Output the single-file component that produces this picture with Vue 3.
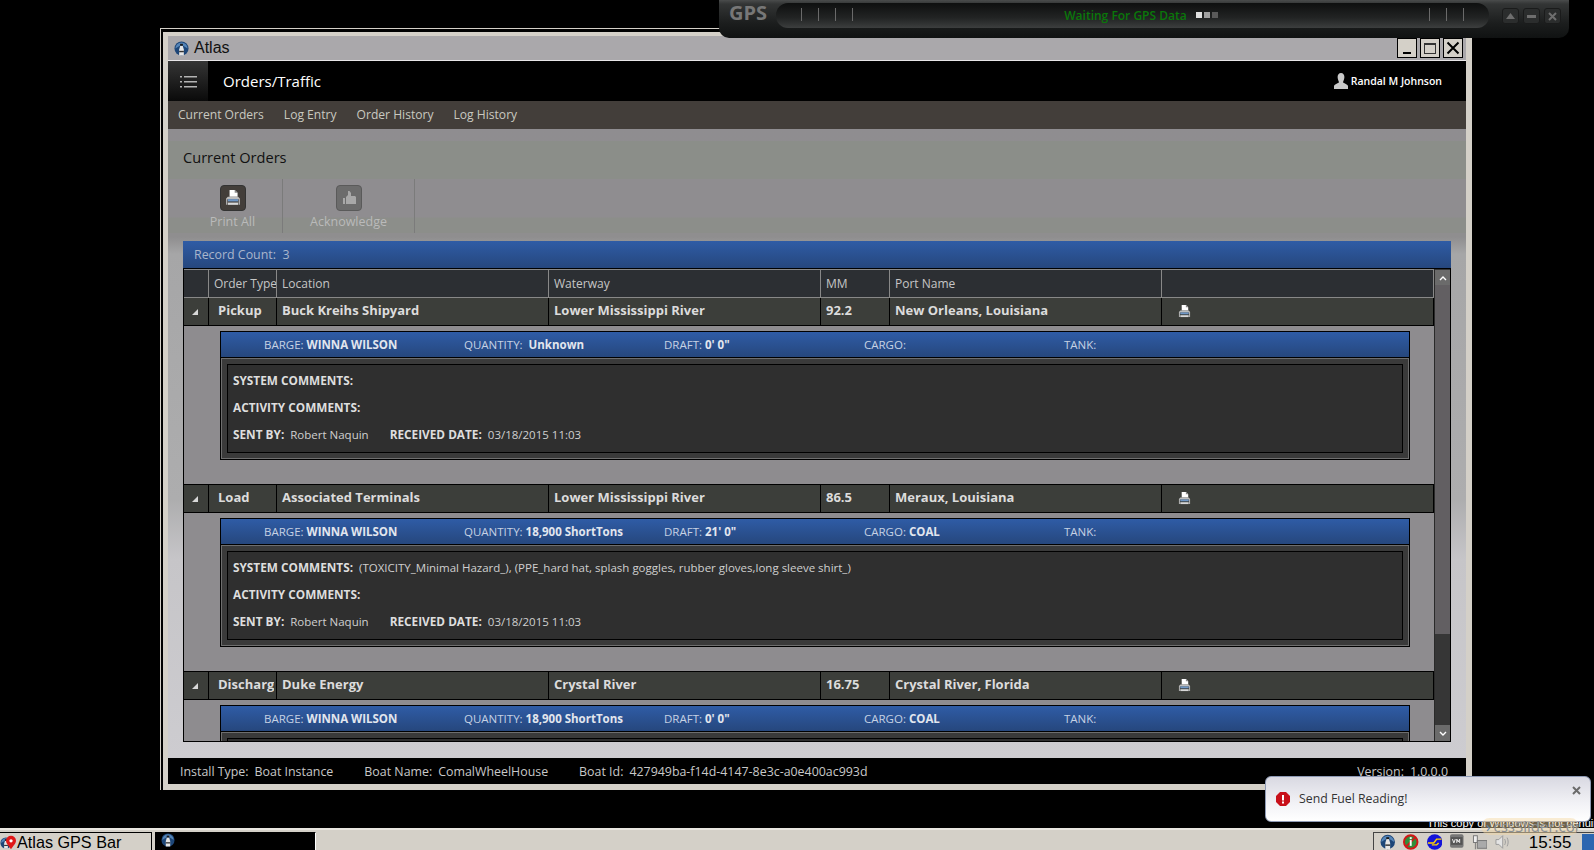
<template>
  <div class="desktop">
    <!-- shared icons -->
    <svg class="sprite" width="0" height="0">
      <symbol id="logo" viewBox="0 0 16 16">
        <circle cx="8" cy="8" r="7.500" fill="#1d4678" />
        <path d="M1.500 8a6.500 6.500 0 0 1 13 0l-3-2-3.500-2-3.500 2z" fill="#5585b8" />
        <path d="M5.500 15.500V9l1.200-4h2.600l1.200 4v6.500z" fill="#e6e6e6" />
        <rect x="6.500" y="3" width="3" height="2" fill="#1a1a1a" />
        <rect x="5.500" y="10.500" width="5" height="1.500" fill="#333" />
      </symbol>
      <symbol id="printer" viewBox="0 0 14 14">
        <path d="M4 0h4.500L11 2.500V6H4z" fill="#fff" />
        <path d="M8.500 0v2.500H11z" fill="#8a8a8a" />
        <path d="M1 13V7.500L2.500 6h9L13 7.500V13h-1V8H2v5z" fill="#bdbdbd" />
        <rect x="2.500" y="8" width="9" height="2" fill="#6f97c6" />
        <rect x="2.500" y="11" width="9" height="2" fill="#d8d8d8" />
      </symbol>
    </svg>

    <!-- Atlas window -->
    <div class="window">
      <div class="window-frame">
        <div class="titlebar">
          <svg class="title-logo" width="15" height="15"><use href="#logo" /></svg>
          <span class="title-text">Atlas</span>
          <div class="win-buttons">
            <button class="win-btn"><span class="min-mark"></span></button>
            <button class="win-btn"><span class="max-mark"></span></button>
            <button class="win-btn close">
              <svg width="14" height="14" viewBox="0 0 14 14"><path d="M1.500 1.500l11 11M12.500 1.500l-11 11" stroke="#000" stroke-width="2" /></svg>
            </button>
          </div>
        </div>

        <header class="app-header">
          <div class="menu-btn">
            <svg width="17" height="13" viewBox="0 0 17 13" fill="#b4b4b4">
              <rect x="0" y="1" width="2" height="1.500" />
              <rect x="4" y="1" width="13" height="1.500" />
              <rect x="0" y="6" width="2" height="1.500" />
              <rect x="4" y="6" width="13" height="1.500" />
              <rect x="0" y="11" width="2" height="1.500" />
              <rect x="4" y="11" width="13" height="1.500" />
            </svg>
          </div>
          <div class="app-title">Orders/Traffic</div>
          <div class="user">
            <svg width="14" height="16" viewBox="0 0 14 16" fill="#c9c9c9">
              <path d="M7 0c2.200 0 3.400 1.700 3.400 4S9.300 8 9 9.200c.3 1 4.500 1.600 5 3.800v3H0v-3c.5-2.200 4.700-2.800 5-3.800C4.700 8 3.600 6.300 3.600 4S4.800 0 7 0z" />
            </svg>
            <span>Randal M Johnson</span>
          </div>
        </header>

        <nav class="subnav">
          <a v-for="item in navItems" :key="item">{{ item }}</a>
        </nav>

        <main class="content">
          <div class="page-title">Current Orders</div>

          <div class="toolbar">
            <div class="tool print-all">
              <div class="tool-icon">
                <svg width="16" height="16"><use href="#printer" /></svg>
              </div>
              <span>Print All</span>
            </div>
            <div class="tool ack">
              <div class="tool-icon disabled">
                <svg width="14" height="14" viewBox="0 0 14 14" fill="#a8a8a8">
                  <path d="M4 6l2-2V0h1.500L9 2v3h4l1 1v7H4zM1 7h2v6H1z" />
                </svg>
              </div>
              <span>Acknowledge</span>
            </div>
          </div>

          <div class="record-bar">Record Count:&nbsp; 3</div>

          <div class="grid">
            <div class="grid-main">
              <div class="grid-head cols">
                <div></div>
                <div>Order Type</div>
                <div>Location</div>
                <div>Waterway</div>
                <div>MM</div>
                <div>Port Name</div>
                <div></div>
              </div>

              <div class="grid-body">
                <section v-for="order in orders" :key="order.location" class="order">
                  <div class="order-row cols">
                    <div class="expander">
                      <svg width="6" height="6" viewBox="0 0 6 6"><path d="M6 0v6H0z" fill="#d8d8d8" /></svg>
                    </div>
                    <div class="type">{{ order.type }}</div>
                    <div>{{ order.location }}</div>
                    <div>{{ order.waterway }}</div>
                    <div>{{ order.mm }}</div>
                    <div>{{ order.port }}</div>
                    <div class="print-cell">
                      <svg width="13" height="13"><use href="#printer" /></svg>
                    </div>
                  </div>

                  <div class="card">
                    <div class="card-head">
                      <div>BARGE: <b>WINNA WILSON</b></div>
                      <div>QUANTITY:{{ order.quantity === 'Unknown' ? '\u00a0 ' : ' ' }}<b>{{ order.quantity }}</b></div>
                      <div>DRAFT: <b>{{ order.draft }}</b></div>
                      <div>CARGO: <b>{{ order.cargo }}</b></div>
                      <div>TANK:</div>
                    </div>
                    <div class="card-panel">
                      <div class="card-inner">
                        <div class="line"><b>SYSTEM COMMENTS:</b><span>{{ order.comments }}</span></div>
                        <div class="line"><b>ACTIVITY COMMENTS:</b></div>
                        <div class="line">
                          <b>SENT BY:</b><span>Robert Naquin</span>
                          <b class="received">RECEIVED DATE:</b><span>03/18/2015 11:03</span>
                        </div>
                      </div>
                    </div>
                  </div>
                </section>
              </div>
            </div>

            <div class="scrollbar">
              <div class="scroll-btn">
                <svg width="8" height="5" viewBox="0 0 8 5"><path d="M1 4l3-3 3 3" fill="none" stroke="#fff" stroke-width="1.400" /></svg>
              </div>
              <div class="scroll-thumb"></div>
              <div class="scroll-track"></div>
              <div class="scroll-btn">
                <svg width="8" height="5" viewBox="0 0 8 5"><path d="M1 1l3 3 3-3" fill="none" stroke="#fff" stroke-width="1.400" /></svg>
              </div>
            </div>
          </div>
        </main>

        <footer class="statusbar">
          <span class="st-label">Install Type:</span><span class="st-value">Boat Instance</span>
          <span class="st-label gap">Boat Name:</span><span class="st-value">ComalWheelHouse</span>
          <span class="st-label gap">Boat Id:</span><span class="st-value">427949ba-f14d-4147-8e3c-a0e400ac993d</span>
          <span class="st-label version">Version:</span><span class="st-value">1.0.0.0</span>
        </footer>
      </div>
    </div>

    <!-- GPS bar docked at the top of the screen -->
    <div class="gps">
      <div class="gps-label">GPS</div>
      <div class="gps-track">
        <div class="ticks">
          <i v-for="n in 4" :key="n"></i>
        </div>
        <div class="gps-status">
          <span>Waiting For GPS Data</span>
          <div class="dots">
            <i class="d1"></i><i class="d2"></i><i class="d3"></i>
          </div>
        </div>
        <div class="ticks">
          <i v-for="n in 3" :key="n"></i>
        </div>
      </div>
      <div class="gps-btns">
        <button><svg width="9" height="6" viewBox="0 0 9 6"><path d="M4.500 0L9 6H0z" fill="#6e6e6e" /></svg></button>
        <button><svg width="9" height="3" viewBox="0 0 9 3"><rect width="9" height="3" fill="#6e6e6e" /></svg></button>
        <button><svg width="9" height="9" viewBox="0 0 9 9"><path d="M1 1l7 7M8 1L1 8" stroke="#6e6e6e" stroke-width="2" /></svg></button>
      </div>
    </div>

    <div class="genuine">This copy of Windows is not genuine</div>

    <!-- notification -->
    <div class="toast">
      <svg width="14" height="14" viewBox="0 0 14 14">
        <path d="M4 0h6l4 4v6l-4 4H4l-4-4V4z" fill="#c8101a" />
        <rect x="6" y="3" width="2" height="5.500" fill="#fff" />
        <rect x="6" y="9.500" width="2" height="2" fill="#fff" />
      </svg>
      <span>Send Fuel Reading!</span>
      <svg class="toast-close" width="9" height="9" viewBox="0 0 9 9"><path d="M1 1l7 7M8 1L1 8" stroke="#6b6b6b" stroke-width="2" /></svg>
    </div>

    <div class="watermark"><i>&#8250;</i>cssSlider.com</div>

    <!-- windows taskbar -->
    <div class="taskbar">
      <div class="task-btn gps-task">
        <svg class="task-logo" width="12" height="14"><use href="#logo" /></svg>
        <svg class="pin" width="10" height="15" viewBox="0 0 12 16">
          <path d="M6 0a6 6 0 0 1 6 6c0 3.500-4 7-6 10C4 13 0 9.500 0 6a6 6 0 0 1 6-6z" fill="#e01818" />
          <circle cx="6" cy="6" r="2" fill="#fff" />
        </svg>
        <span>Atlas GPS Bar</span>
      </div>
      <div class="task-btn atlas-task">
        <svg width="14" height="14"><use href="#logo" /></svg>
      </div>
      <div class="tray">
        <svg width="16" height="16"><use href="#logo" /></svg>
        <svg width="16" height="16" viewBox="0 0 16 16">
          <circle cx="8" cy="8" r="7" fill="#2f8f3a" stroke="#d01818" stroke-width="2" />
          <path d="M3 13L13 3" stroke="#d01818" stroke-width="2" />
          <rect x="7" y="3" width="2" height="2" fill="#fff" /><rect x="7" y="6" width="2" height="6" fill="#fff" />
        </svg>
        <svg width="16" height="16" viewBox="0 0 16 16">
          <circle cx="8" cy="8" r="8" fill="#1414d8" />
          <path d="M1 9h6l3-4h5M5 11h5l2-2" stroke="#ffd400" stroke-width="1.500" fill="none" />
        </svg>
        <svg width="14" height="14" viewBox="0 0 14 14">
          <rect width="14" height="14" rx="2" fill="#777" />
          <rect x="1" y="3" width="12" height="8" fill="#555" />
          <path d="M2.500 5l1.500 4 1.500-4M7 9V5l1.500 3L10 5v4" stroke="#eee" stroke-width="1" fill="none" />
        </svg>
        <svg width="16" height="16" viewBox="0 0 16 16" fill="none" stroke="#777">
          <rect x="1.500" y="1.500" width="4" height="7" fill="#eee" />
          <rect x="5.500" y="6.500" width="10" height="8" fill="#aaa" />
          <path d="M3.500 8.500v7" />
        </svg>
        <svg width="15" height="16" viewBox="0 0 15 16" fill="none" stroke="#9a9a9a">
          <path d="M1 5.500h3l4-4v13l-4-4H1z" fill="#e4e4e4" />
          <path d="M10 5c1 2 1 4 0 6M12.500 3.500c1.500 3 1.500 6 0 9" />
        </svg>
        <span class="clock">15:55</span>
        <div class="show-desktop"></div>
      </div>
    </div>
  </div>
</template>

<script setup>
const navItems = ['Current Orders', 'Log Entry', 'Order History', 'Log History']

const orders = [
  {
    type: 'Pickup',
    location: 'Buck Kreihs Shipyard',
    waterway: 'Lower Mississippi River',
    mm: '92.2',
    port: 'New Orleans, Louisiana',
    quantity: 'Unknown',
    draft: `0' 0"`,
    cargo: '',
    comments: ''
  },
  {
    type: 'Load',
    location: 'Associated Terminals',
    waterway: 'Lower Mississippi River',
    mm: '86.5',
    port: 'Meraux, Louisiana',
    quantity: '18,900 ShortTons',
    draft: `21' 0"`,
    cargo: 'COAL',
    comments: '(TOXICITY_Minimal Hazard_), (PPE_hard hat, splash goggles, rubber gloves,long sleeve shirt_)'
  },
  {
    type: 'Discharge',
    location: 'Duke Energy',
    waterway: 'Crystal River',
    mm: '16.75',
    port: 'Crystal River, Florida',
    quantity: '18,900 ShortTons',
    draft: `0' 0"`,
    cargo: 'COAL',
    comments: ''
  }
]
</script>

<style>
body {
  margin: 0;
  background: #000;
}
</style>

<style scoped>
.desktop {
  position: relative;
  width: 1594px;
  height: 850px;
  overflow: hidden;
  background: #000;
  display: flex;
  flex-direction: column;
  justify-content: flex-end;
  font-family: "Open Sans", "Noto Sans", sans-serif;
}

.sprite {
  position: absolute;
}

/* window */
.window {
  position: absolute;
  left: 160px;
  top: 28px;
  width: 1312px;
  height: 762px;
  box-sizing: border-box;
  border-left: 1px solid #d4d0c8;
  border-top: 1px solid #d4d0c8;
  padding: 3px 0 0 2px;
  background: #000;
}

.window-frame {
  height: 100%;
  box-sizing: border-box;
  border: solid #d4d0c8;
  border-width: 4px 6px 6px 5px;
  display: flex;
  flex-direction: column;
}

.titlebar {
  height: 25px;
  box-sizing: border-box;
  flex: none;
  background: #aaa8ab;
  border-bottom: 1px solid #e8e6e8;
  display: flex;
  align-items: center;
  padding-left: 6px;
}

.title-text {
  margin-left: 5px;
  font: 16px "Liberation Sans", sans-serif;
  color: #111;
}

.win-buttons {
  margin-left: auto;
  margin-right: 3px;
  display: flex;
  gap: 3px;
  height: 20px;
  margin-top: 2px;
  align-self: flex-start;
}

.win-btn {
  width: 20px;
  height: 20px;
  padding: 0;
  border: 1px solid #000;
  background: #d4d0c8;
  position: relative;
  display: flex;
  align-items: center;
  justify-content: center;
}

.min-mark {
  position: absolute;
  left: 5px;
  bottom: 3px;
  width: 8px;
  height: 2px;
  background: #000;
}

.max-mark {
  width: 12px;
  height: 11px;
  border: 1px solid #333;
  border-top-width: 2px;
  box-sizing: border-box;
}

.app-header {
  height: 40px;
  flex: none;
  background: #000;
  display: flex;
  align-items: center;
}

.menu-btn {
  width: 40px;
  height: 100%;
  background: linear-gradient(#353535, #0a0a0a);
  display: flex;
  align-items: center;
  justify-content: center;
}

.app-title {
  margin-left: 15px;
  font-size: 15px;
  color: #fff;
}

.user {
  margin-left: auto;
  margin-right: 24px;
  display: flex;
  align-items: center;
  gap: 3px;
  font-size: 10.500px;
  font-weight: 600;
  color: #fff;
}

.subnav {
  height: 28px;
  flex: none;
  background: #433e3a;
  display: flex;
  align-items: center;
  gap: 20px;
  padding-left: 10px;
  padding-bottom: 1px;
  box-sizing: border-box;
  font-size: 12.100px;
  color: #c9c9c0;
}

.content {
  flex: 1;
  min-height: 0;
  padding-top: 12px;
  background: linear-gradient(#8f8d90 0, #8f8e8f 108px, #a6a6a7 125px, #adadae 370px, #c6c5c8 430px, #cdccd0 100%);
}

.page-title {
  height: 38px;
  box-sizing: border-box;
  padding-left: 15px;
  line-height: 33px;
  font-size: 14.600px;
  color: #111;
  background: #8b8e89;
}

.toolbar {
  height: 54px;
  margin-bottom: 8px;
  padding-left: 15px;
  display: flex;
  background: linear-gradient(#8f8d90 0, #8f8d90 38px, #8c8e8a 39px);
}

.tool {
  border-right: 1px solid #7b7b7b;
  display: flex;
  flex-direction: column;
  align-items: center;
  padding-top: 6px;
  font-size: 12.500px;
  color: #bababa;
  box-sizing: border-box;
}

.print-all {
  width: 100px;
}

.ack {
  width: 132px;
}

.tool-icon {
  width: 26px;
  height: 26px;
  box-sizing: border-box;
  border: 1px solid #333;
  border-radius: 4px;
  background: #433e3a;
  display: flex;
  align-items: center;
  justify-content: center;
  margin-bottom: 2px;
}

.tool-icon.disabled {
  background: #6c6c6c;
  border-color: #5a5a5a;
}

.record-bar {
  height: 27px;
  margin: 0 15px;
  padding-left: 11px;
  line-height: 27px;
  font-size: 12.400px;
  color: #a9b6cc;
  background: linear-gradient(#2f5ca6, #26477d);
}

/* orders grid */
.grid {
  height: 474px;
  margin: 0 15px;
  box-sizing: border-box;
  border: 1px solid #000;
  display: flex;
  background: #8e8c8f;
}

.grid-main {
  width: 1250px;
  display: flex;
  flex-direction: column;
  min-height: 0;
}

.cols {
  display: grid;
  grid-template-columns: 24px 68px 272px 272px 69px 272px 272px;
}

.cols > div {
  overflow: hidden;
  white-space: nowrap;
  box-sizing: border-box;
  border-left: 1px solid #888;
  padding-left: 5px;
}

.cols > div:first-child {
  border-left: 0;
}

.grid-head {
  height: 27px;
  flex: none;
  border-top: 1px solid #888;
  border-right: 1px solid #888;
  background: #2c2f33;
  font-size: 12px;
  line-height: 27px;
  color: #c6c6c6;
}

.grid-body {
  flex: 1;
  min-height: 0;
  overflow: hidden;
}

.order {
  height: 187px;
  box-sizing: border-box;
  border-top: 1px solid #000;
}

.order:first-child {
  border-top-color: #888;
}

.order-row {
  height: 27px;
  box-sizing: content-box;
  border-bottom: 1px solid #000;
  border-right: 1px solid #000;
  background: #3c3e3a;
  font-size: 13px;
  font-weight: 700;
  line-height: 24px;
  color: #dcdcdc;
}

.order-row > div {
  border-left-color: #000;
}

.order-row .type {
  padding-left: 9px;
  border-right: 2px solid #3c3e3a;
}

.expander {
  display: flex;
  align-items: center;
  padding-left: 8px !important;
}

.print-cell {
  display: flex;
  align-items: center;
  padding-left: 16px !important;
}

.card {
  width: 1190px;
  margin: 5px 0 0 36px;
  box-sizing: border-box;
  border: 1px solid #000;
}

.card-head {
  height: 26px;
  box-sizing: border-box;
  border-bottom: 1px solid #000;
  padding-left: 43px;
  display: grid;
  grid-template-columns: repeat(5, 200px);
  align-items: center;
  background: linear-gradient(#2f5ca6, #26477d);
  font-size: 11.500px;
  color: #c6d2e4;
}

.card-head b {
  color: #e2e6ee;
}

.card-panel {
  padding: 5px;
  border: 1px solid #6e6e6e;
  background: #3a3a3a;
}

.card-inner {
  height: 89px;
  box-sizing: border-box;
  border: 1px solid #000;
  padding: 2px 5px 0;
  background: #2f2f2f;
  font-size: 11.500px;
  color: #cfcfcf;
}

.line {
  height: 27px;
  line-height: 27px;
  white-space: nowrap;
  display: flex;
  gap: 6px;
}

.line b {
  font-size: 11.800px;
  color: #dedede;
}

.received {
  margin-left: 15px;
}

/* scrollbar */
.scrollbar {
  width: 16px;
  flex: none;
  box-sizing: border-box;
  border-left: 1px solid #2a2a2a;
  background: #363636;
  display: flex;
  flex-direction: column;
}

.scroll-btn {
  height: 16px;
  flex: none;
  margin-top: 1px;
  background: #6b6b6b;
  display: flex;
  align-items: center;
  justify-content: center;
}

.scroll-thumb {
  height: 349px;
  background: #625f62;
  margin-top: -1px;
}

.scroll-track {
  flex: 1;
}

.statusbar {
  height: 26px;
  flex: none;
  background: #000;
  display: flex;
  align-items: center;
  padding: 0 18px 0 12px;
  font-size: 12.400px;
  color: #c8c8c8;
  white-space: nowrap;
}

.st-value {
  margin-left: 6px;
}

.st-label.gap {
  margin-left: 31px;
}

.version {
  margin-left: auto;
}

/* gps bar */
.gps {
  position: absolute;
  left: 719px;
  top: 0;
  width: 850px;
  height: 38px;
  box-sizing: border-box;
  padding: 3px 8px 0 10px;
  border-radius: 0 0 10px 10px;
  background: linear-gradient(#4a4c4c 0, #333535 4px, #1c1e1e 60%, #101212 100%);
  display: flex;
  align-items: flex-start;
}

.gps-label {
  width: 47px;
  font-size: 20px;
  font-weight: 700;
  line-height: 19px;
  color: #777;
}

.gps-track {
  width: 714px;
  height: 25px;
  border-radius: 12px;
  background: linear-gradient(#0e0f0f, #222424 60%, #3c3e3e);
  display: flex;
  align-items: center;
  justify-content: space-between;
  padding: 0 25px;
  box-sizing: border-box;
}

.ticks {
  display: flex;
  gap: 16px;
  height: 13px;
  margin-top: -2px;
}

.ticks i {
  width: 1px;
  background: #6a6a6a;
}

.gps-status {
  display: flex;
  align-items: center;
  gap: 9px;
  margin-top: -1px;
  font-size: 12px;
  font-weight: 600;
  color: #0a770a;
}

.dots {
  display: flex;
  gap: 2px;
}

.dots i {
  width: 6px;
  height: 6px;
}

.d1 {
  background: #e0e0e0;
}

.d2 {
  background: #a0a0a0;
}

.d3 {
  background: #5a5a5a;
}

.gps-btns {
  display: flex;
  gap: 4px;
  margin: 5px 0 0 13px;
}

.gps-btns button {
  width: 17px;
  height: 16px;
  padding: 0;
  border: 1px solid #1a1b1b;
  border-radius: 3px;
  background: #2b2d2d;
  display: flex;
  align-items: center;
  justify-content: center;
}

.genuine {
  position: absolute;
  left: 1427px;
  top: 817px;
  font: 11px "Liberation Sans", sans-serif;
  color: #fff;
  white-space: nowrap;
}

.toast {
  position: absolute;
  left: 1265px;
  top: 776px;
  width: 326px;
  height: 46px;
  box-sizing: border-box;
  border: 1px solid #8e9ab5;
  border-radius: 6px;
  background: linear-gradient(#d9d9e2, #f2f2f6 60%, #fff);
  display: flex;
  align-items: center;
  gap: 9px;
  padding: 0 10px 1px;
  font-size: 12.300px;
  color: #333;
}

.toast-close {
  position: absolute;
  right: 9px;
  top: 9px;
}

.watermark {
  position: absolute;
  z-index: 2;
  left: 1481px;
  top: 818px;
  height: 17px;
  width: 98px;
  border-radius: 9px;
  background: rgba(245, 215, 160, 0.45);
  font: 15px "Open Sans", sans-serif;
  line-height: 17px;
  color: #8a8f94;
  white-space: nowrap;
  overflow: hidden;
}

.watermark i {
  font-style: normal;
  color: #5f89b0;
  margin: 0 3px 0 5px;
}

/* taskbar */
.taskbar {
  height: 22px;
  flex: none;
  box-sizing: border-box;
  border-top: 2px solid #e8e6e0;
  background: #d4d0c8;
  padding-top: 2px;
  display: flex;
  font-family: "Liberation Sans", sans-serif;
  position: relative;
}

.task-btn {
  height: 18px;
  box-sizing: border-box;
  border: 1px solid #000;
  border-bottom: 0;
  overflow: hidden;
}

.gps-task {
  width: 152px;
  display: flex;
  align-items: flex-start;
  border-left: 0;
  font-size: 16.200px;
  line-height: 19px;
  color: #000;
  white-space: nowrap;
}

.task-logo {
  margin-top: 3px;
  flex: none;
}

.pin {
  margin: 2px 0 0 -6px;
  flex: none;
}

.gps-task span {
  margin-left: 1px;
}

.atlas-task {
  width: 161px;
  margin-left: 3px;
  background: #000;
  border-right: 1px solid #fff;
  padding-left: 5px;
}

.tray {
  margin-left: auto;
  width: 221px;
  height: 18px;
  box-sizing: border-box;
  border: solid #444;
  border-width: 1px 0 0 1px;
  display: flex;
  align-items: flex-start;
  gap: 8px;
  padding: 1px 0 0 6px;
  overflow: hidden;
}

.clock {
  margin-left: 11px;
  font-size: 17px;
  line-height: 18px;
  color: #000;
}

.show-desktop {
  width: 12px;
  height: 18px;
  margin-left: 3px;
  background: #2c66b0;
}
</style>
